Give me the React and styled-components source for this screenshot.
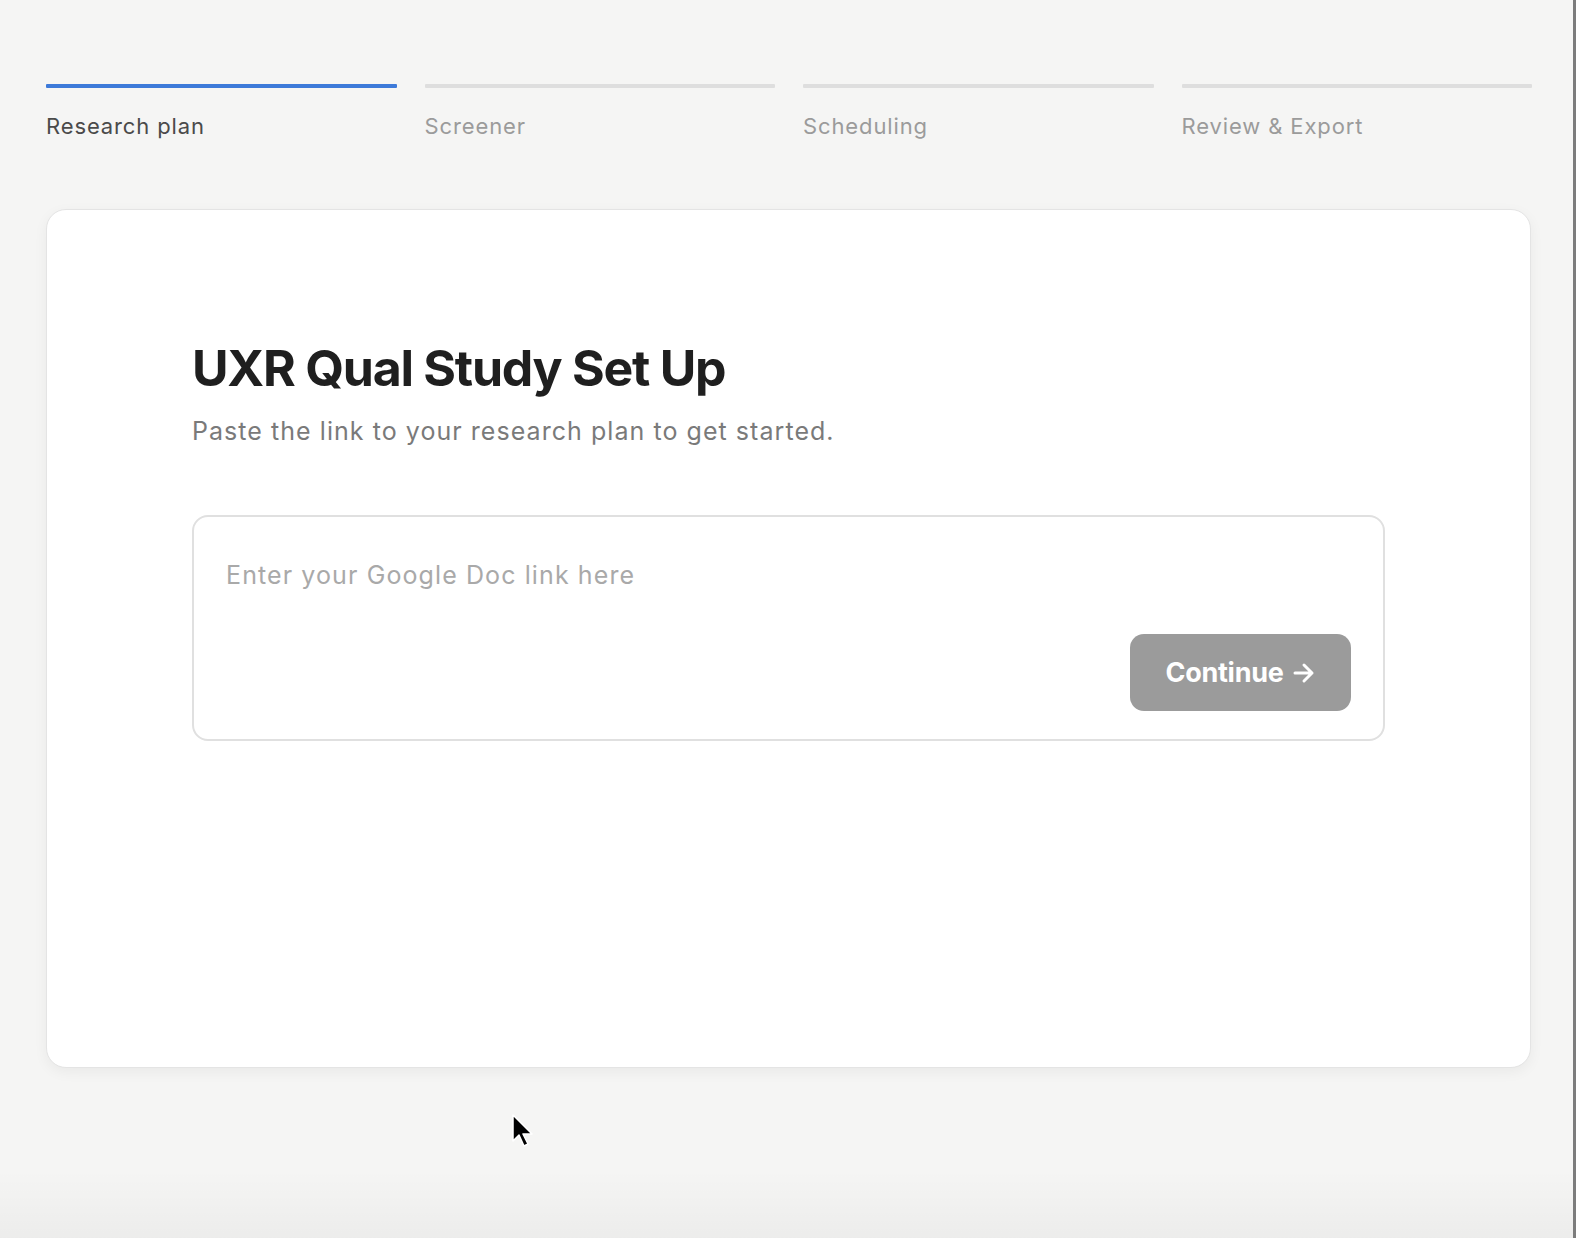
import React, { useState } from 'react';
import styled, { createGlobalStyle } from 'styled-components';

const GlobalStyle = createGlobalStyle`
    html, body {
        margin: 0;
        padding: 0;
        background: #f5f5f4;
    }
    body {
        font-family: Inter, "Noto Sans", "Liberation Sans", sans-serif;
        -webkit-font-smoothing: antialiased;
    }
    * {
        box-sizing: border-box;
    }
`

const Page = styled.div`
    position: relative;
    min-height: 1238px;
    padding: 84px 44px 0 46px;
    background: linear-gradient(to bottom, rgba(0,0,0,0) 1170px, rgba(0,0,0,0.035) 1238px);
    overflow: hidden;
`
const Steps = styled.div`
    display: grid;
    grid-template-columns: repeat(4, 1fr);
    column-gap: 28px;
`
const Step = styled.div`
    display: flex;
    flex-direction: column;
`
const Bar = styled.div`
    height: 4px;
    border-radius: 1px;
    background-color: ${props => props.active ? '#3d7ad9' : '#dedede'};
`
const StepLabel = styled.div`
    margin-top: 25px;
    font-size: 22px;
    line-height: 27px;
    letter-spacing: 0.04em;
    color: ${props => props.active ? '#4a4a4a' : '#9b9b9b'};
`
const Card = styled.div`
    margin-top: 69px;
    width: 1485px;
    height: 859px;
    background: #fff;
    border: 1px solid #e4e4e4;
    border-radius: 20px;
    box-shadow: 0 4px 14px rgba(0, 0, 0, 0.05);
    padding: 128px 145px 0 145px;
`
const Title = styled.h1`
    margin: 0;
    font-size: 50px;
    line-height: 60px;
    font-weight: 700;
    letter-spacing: -0.025em;
    color: #1f1f1f;
`
const Subtitle = styled.p`
    margin: 18px 0 0 0;
    font-size: 25px;
    line-height: 30px;
    letter-spacing: 0.042em;
    color: #7a7a7a;
`
const InputBox = styled.div`
    margin-top: 69px;
    height: 226px;
    border: 2px solid #e0e0e0;
    border-radius: 16px;
    padding: 42px 32px 28px 32px;
    display: flex;
    flex-direction: column;
    justify-content: space-between;
`
const LinkInput = styled.input`
    border: none;
    background: transparent;
    font-family: inherit;
    font-size: 25px;
    line-height: 32px;
    letter-spacing: 0.044em;
    padding: 0;
    color: #333;
    &::placeholder {
        color: #a9a9a9;
    }
    &:focus {
        outline: none;
    }
`
const Actions = styled.div`
    display: flex;
    justify-content: flex-end;
`
const ContinueBtn = styled.button`
    width: 221px;
    height: 77px;
    border: none;
    border-radius: 14px;
    background-color: #9b9b9b;
    color: #fff;
    font-family: inherit;
    font-size: 27px;
    font-weight: 700;
    letter-spacing: -0.01em;
    display: flex;
    align-items: center;
    justify-content: center;
    gap: 8px;
    cursor: pointer;
`
const Cursor = styled.svg`
    position: absolute;
    left: 512px;
    top: 1114px;
`
const WindowEdge = styled.div`
    position: absolute;
    top: 0;
    right: 0;
    width: 3px;
    height: 100%;
    background: #7c7c7c;
`

const steps = ['Research plan', 'Screener', 'Scheduling', 'Review & Export'];

export default function App() {
    const [link, setLink] = useState('');

    return (
        <>
            <GlobalStyle />
            <Page>
                <Steps>
                    {steps.map((s, i) => (
                        <Step key={s}>
                            <Bar active={i === 0} />
                            <StepLabel active={i === 0}>{s}</StepLabel>
                        </Step>
                    ))}
                </Steps>
                <Card>
                    <Title>UXR Qual Study Set Up</Title>
                    <Subtitle>Paste the link to your research plan to get started.</Subtitle>
                    <InputBox>
                        <LinkInput
                            placeholder="Enter your Google Doc link here"
                            value={link}
                            onChange={e => setLink(e.target.value)}
                        />
                        <Actions>
                            <ContinueBtn>
                                Continue
                                <svg width="24" height="22" viewBox="0 0 24 22" fill="none" stroke="#fff" strokeWidth="3" strokeLinecap="round" strokeLinejoin="round">
                                    <path d="M3 11h17M12 3l8 8-8 8" />
                                </svg>
                            </ContinueBtn>
                        </Actions>
                    </InputBox>
                </Card>
                <Cursor width="22" height="34" viewBox="0 0 22 34">
                    <path d="M1 1v26l6-6 5 11 4-2-5-10h9z" fill="#000" stroke="#fff" strokeWidth="1.5" strokeLinejoin="round" />
                </Cursor>
                <WindowEdge />
            </Page>
        </>
    );
}
